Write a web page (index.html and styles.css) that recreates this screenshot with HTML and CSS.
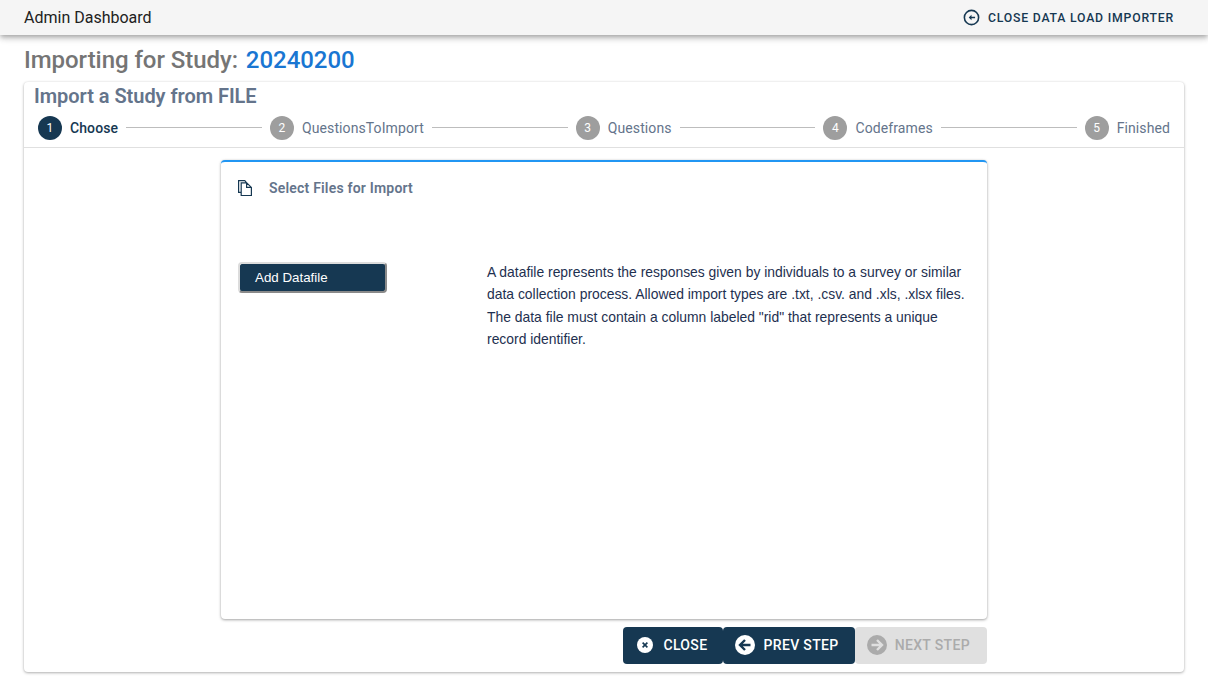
FILE: index.html
```html
<!DOCTYPE html>
<html lang="en">
<head>
    <meta charset="UTF-8">
    <title>Admin Dashboard</title>
    <link rel="stylesheet" href="styles.css">
</head>
<body>
    <header class="topbar">
        <span class="topbar-title">Admin Dashboard</span>
        <button class="topbar-close">
            <svg class="topbar-icon" viewBox="0 0 24 24" width="19" height="19"><path fill="currentColor" d="M12 2a10 10 0 1 0 0 20 10 10 0 0 0 0-20zm0 18a8 8 0 1 1 0-16 8 8 0 0 1 0 16z"/><path fill="currentColor" d="M12 8.5v2.5h4.5v2H12v2.5L8.5 12z"/></svg>
            Close Data Load Importer
        </button>
    </header>

    <h1 class="study-heading">Importing for Study: <span class="study-id">20240200</span></h1>

    <main class="import-card">
        <h2 class="import-title">Import a Study from FILE</h2>
        <div class="stepper">
            <div class="step step-active"><span class="step-num">1</span><span class="step-label">Choose</span></div>
            <div class="step-line"></div>
            <div class="step"><span class="step-num">2</span><span class="step-label">QuestionsToImport</span></div>
            <div class="step-line"></div>
            <div class="step"><span class="step-num">3</span><span class="step-label">Questions</span></div>
            <div class="step-line"></div>
            <div class="step"><span class="step-num">4</span><span class="step-label">Codeframes</span></div>
            <div class="step-line"></div>
            <div class="step"><span class="step-num">5</span><span class="step-label">Finished</span></div>
        </div>

        <div class="step-body">
            <section class="files-card">
                <div class="files-head">
                    <svg viewBox="0 0 14 16" width="14" height="16" class="files-icon"><path fill="none" stroke="currentColor" stroke-width="1.2" d="M2.6 12.4H.6V.6h6.2l1.6 2M3.2 2.9h5.5l4.7 4.5v8.1H3.2zM8.6 2.9v4.5h4.8"/></svg>
                    <span class="files-title">Select Files for Import</span>
                </div>
                <div class="files-content">
                    <div class="files-action">
                        <button class="add-btn">Add Datafile</button>
                    </div>
                    <p class="files-text">A datafile represents the responses given by individuals to a survey or similar data collection process. Allowed import types are .txt, .csv. and .xls, .xlsx files. The data file must contain a column labeled "rid" that represents a unique record identifier.</p>
                </div>
            </section>

            <div class="actions">
                <button class="action-btn">
                    <svg viewBox="0 0 20 20" width="20" height="20"><circle cx="10" cy="10" r="8" fill="#fff"/><path d="M7.6 7.6l4.8 4.8m0-4.8l-4.8 4.8" stroke="#163852" stroke-width="1.6" fill="none"/></svg>
                    Close
                </button>
                <button class="action-btn">
                    <svg viewBox="0 0 20 20" width="20" height="20"><circle cx="10" cy="10" r="10" fill="#fff"/><path d="M15.5 10H6M10 5l-5 5 5 5" stroke="#163852" stroke-width="2.4" fill="none"/></svg>
                    Prev Step
                </button>
                <button class="action-btn action-btn-off" disabled>
                    <svg viewBox="0 0 20 20" width="20" height="20"><circle cx="10" cy="10" r="10" fill="#ababab"/><path d="M4.5 10H14M10 5l5 5-5 5" stroke="#e0e0e0" stroke-width="2.4" fill="none"/></svg>
                    Next Step
                </button>
            </div>
        </div>
    </main>
</body>
</html>
```

FILE: styles.css
```css
html, body {
    height: 100%;
}

body {
    margin: 0;
    background-color: #fff;
    font-family: Roboto, sans-serif;
    overflow: hidden;
}

button {
    font-family: Roboto, sans-serif;
}

.topbar {
    height: 35px;
    display: flex;
    justify-content: space-between;
    align-items: center;
    padding: 0 34px 0 24px;
    background-color: #f5f5f5;
    box-shadow: 0 2px 4px -1px rgba(0, 0, 0, 0.2), 0 4px 5px 0 rgba(0, 0, 0, 0.14), 0 1px 10px 0 rgba(0, 0, 0, 0.12);
}

.topbar-title {
    font-size: 16px;
    font-weight: 400;
    color: #212121;
}

.topbar-close {
    display: flex;
    align-items: center;
    gap: 7px;
    padding: 0;
    border: none;
    background: none;
    color: #163852;
    font-size: 12.25px;
    font-weight: 500;
    letter-spacing: 0.8px;
    text-transform: uppercase;
}

.study-heading {
    margin: 0;
    padding: 10px 24px 0;
    height: 37px;
    box-sizing: border-box;
    font-size: 24px;
    line-height: 30px;
    font-weight: 500;
    letter-spacing: -0.05px;
    color: #757575;
}

.study-id {
    margin-left: 2px;
    color: #1976d2;
}

.import-card {
    margin: 10px 24px 0;
    height: 590px;
    box-sizing: border-box;
    background-color: #fff;
    border-radius: 4px;
    box-shadow: 0 1px 3px rgba(0, 0, 0, 0.3), 0 0 2px rgba(0, 0, 0, 0.08);
}

.import-title {
    margin: 0;
    padding: 2px 10px 0;
    font-size: 20px;
    line-height: 24px;
    font-weight: 600;
    letter-spacing: -0.04px;
    color: #64748b;
}

.stepper {
    display: flex;
    align-items: center;
    height: 39px;
    padding: 0 14px;
    margin-top: 0;
    border-bottom: 1px solid #e0e0e0;
}

.step {
    display: flex;
    align-items: center;
    gap: 8px;
    font-size: 14px;
    letter-spacing: 0.1px;
    color: #64748b;
}

.step-num {
    width: 24px;
    height: 24px;
    border-radius: 50%;
    display: flex;
    align-items: center;
    justify-content: center;
    background-color: #9e9e9e;
    color: #fff;
    font-size: 12px;
}

.step-active .step-num {
    background-color: #163852;
}

.step-active .step-label {
    color: #163852;
    font-weight: 500;
}

.step-line {
    flex: 1;
    height: 1px;
    margin: 0 8px;
    background-color: #bdbdbd;
}

.step-body {
    width: 766px;
    margin: 12px auto 0;
}

.files-card {
    height: 459px;
    box-sizing: border-box;
    border-top: 2px solid #2196f3;
    border-radius: 4px;
    background-color: #fff;
    box-shadow: 0 1px 3px rgba(0, 0, 0, 0.35), 0 0 2px rgba(0, 0, 0, 0.08);
}

.files-head {
    display: flex;
    align-items: center;
    gap: 17px;
    padding: 18px 17px 0;
    height: 16px;
}

.files-icon {
    color: #163852;
}

.files-title {
    font-size: 14px;
    font-weight: 600;
    letter-spacing: 0.2px;
    color: #64748b;
}

.files-content {
    display: flex;
    padding: 65px 17px 0;
}

.files-action {
    width: 249px;
    flex: none;
    padding-top: 1px;
}

.add-btn {
    display: block;
    width: 149px;
    height: 31px;
    padding: 0 0 0 15px;
    text-align: left;
    background-color: #163852;
    color: #fff;
    font-family: "Liberation Sans", sans-serif;
    font-size: 13.33px;
    border: 2px solid;
    border-color: #dcdcdc #8a8a8a #8a8a8a #dcdcdc;
    border-radius: 4px;
}

.files-text {
    margin: 0;
    width: 484px;
    font-family: "Liberation Sans", sans-serif;
    font-size: 13.9px;
    line-height: 22.4px;
    color: #1e3050;
}

.actions {
    display: flex;
    justify-content: flex-end;
    margin-top: 8px;
}

.action-btn {
    display: flex;
    align-items: center;
    gap: 8px;
    height: 37px;
    padding: 0 16px 1px 12px;
    border: none;
    border-radius: 4px;
    background-color: #163852;
    color: #fff;
    font-size: 14px;
    font-weight: 500;
    letter-spacing: 0.35px;
    text-transform: uppercase;
}

.action-btn-off {
    padding-right: 17px;
    background-color: #e0e0e0;
    color: #ababab;
}
```
